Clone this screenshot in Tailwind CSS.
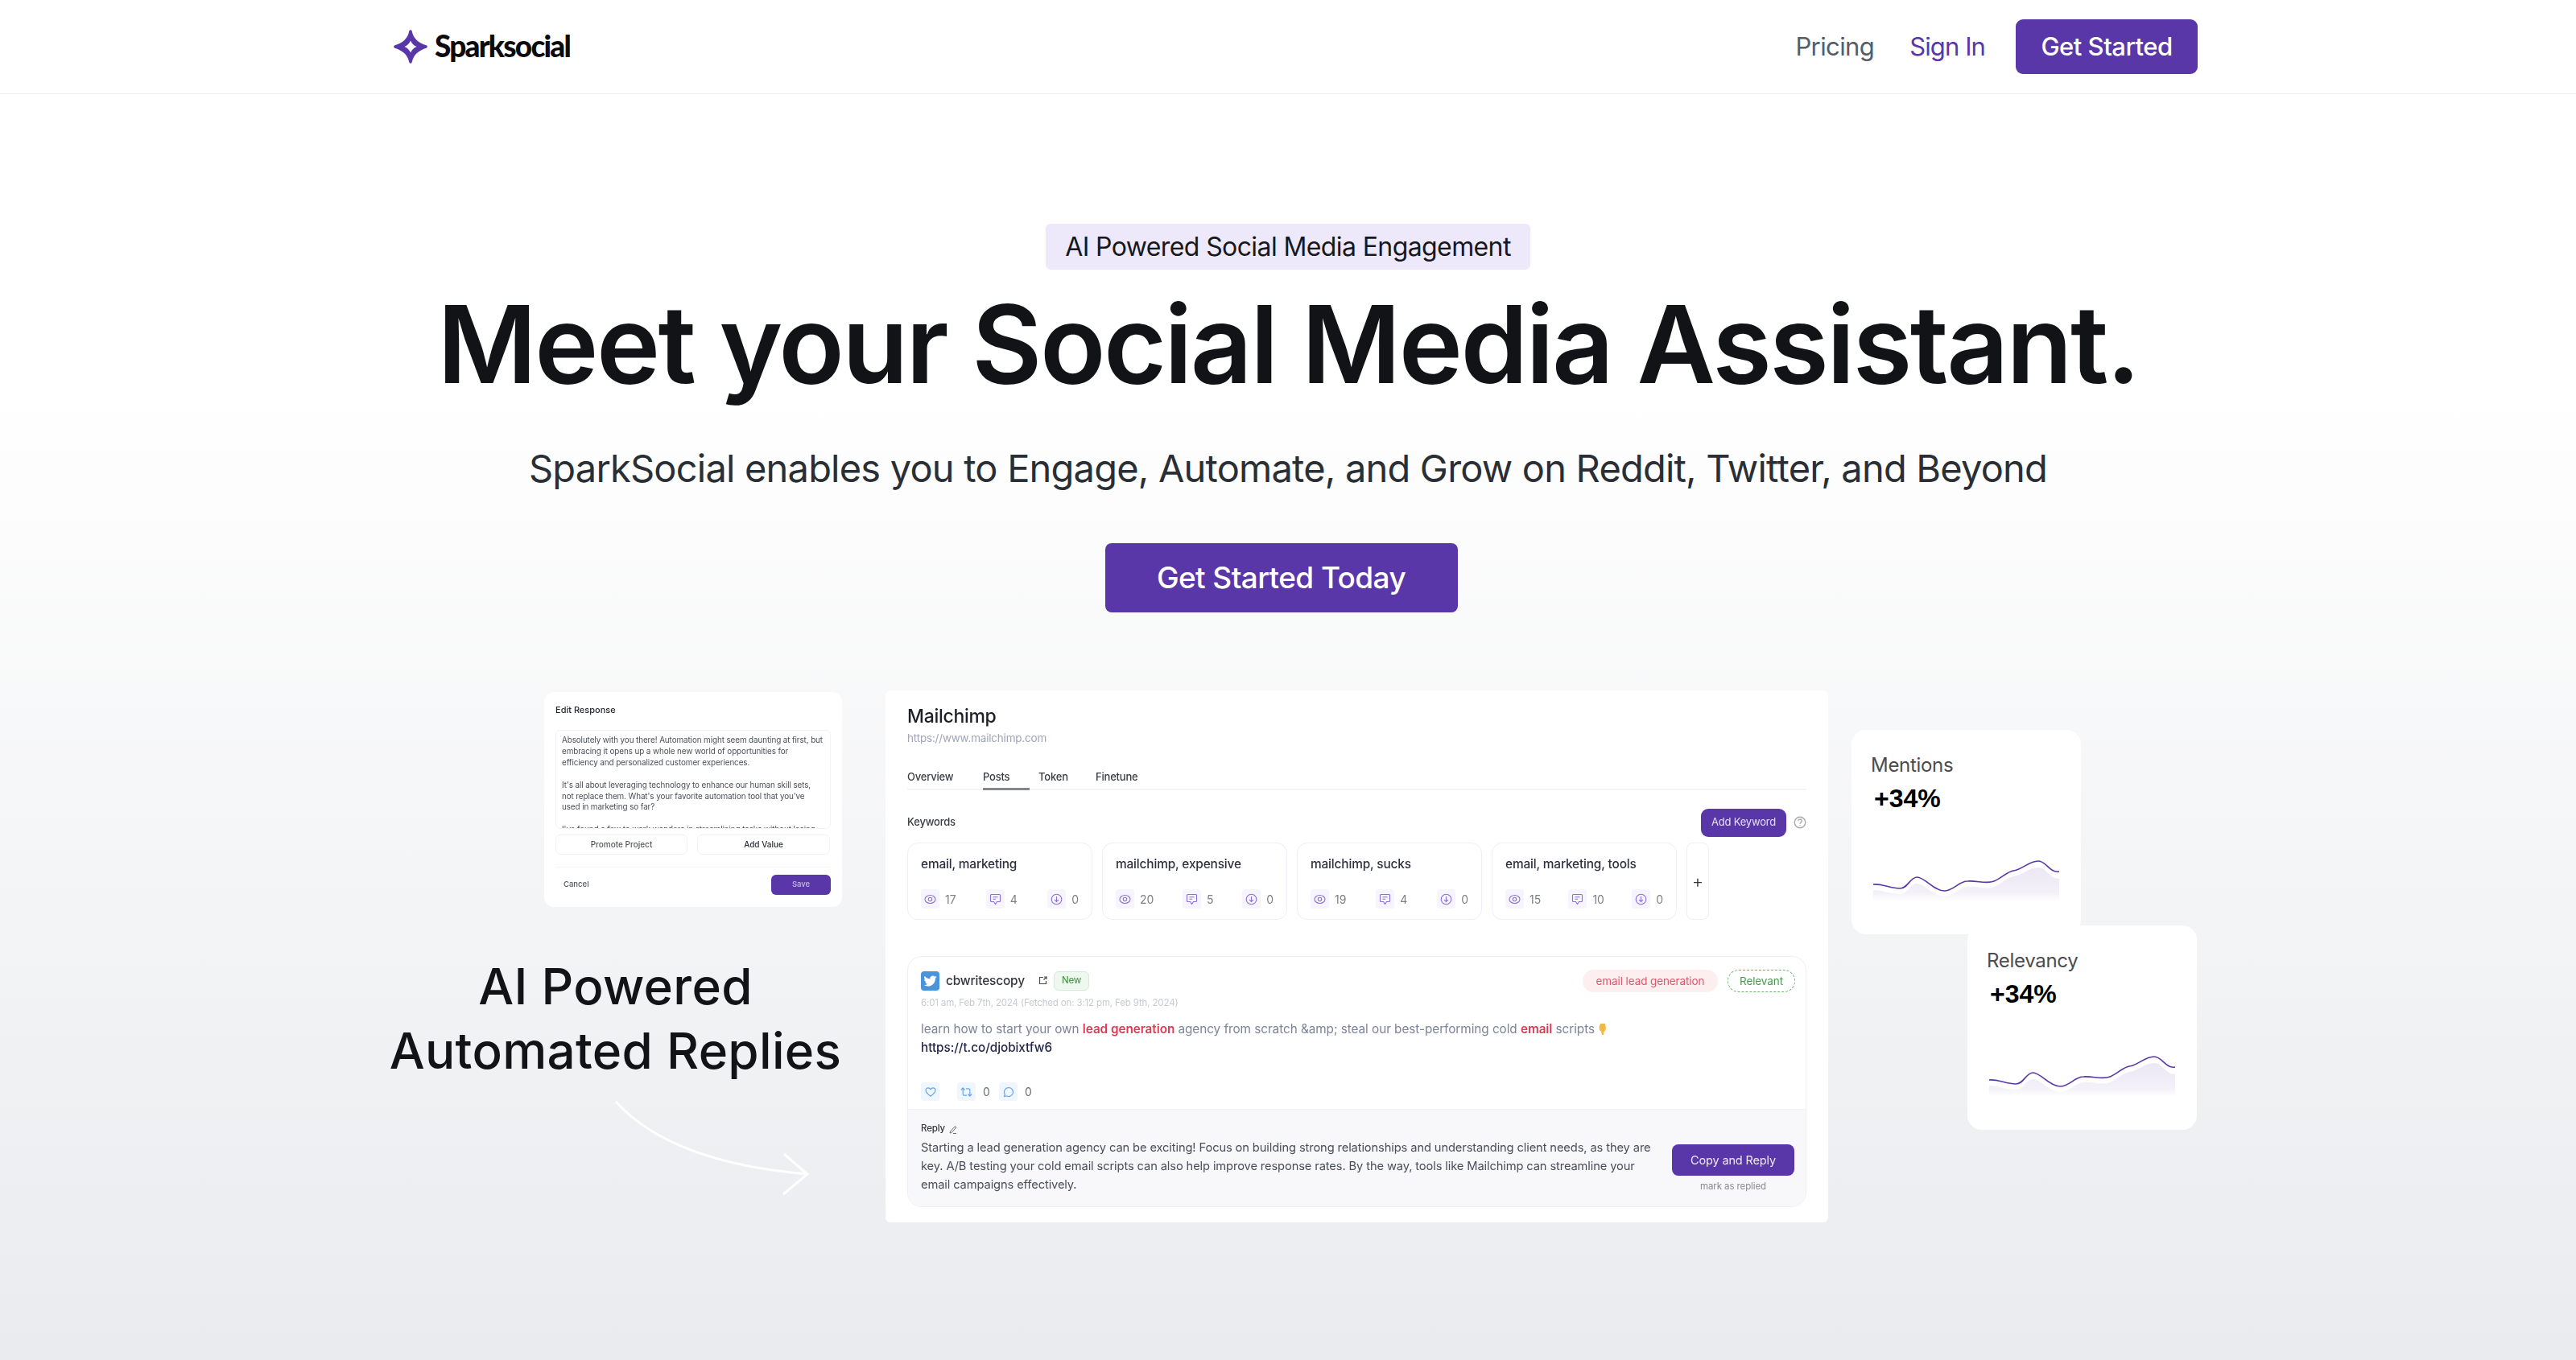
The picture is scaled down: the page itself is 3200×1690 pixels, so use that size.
<!DOCTYPE html>
<html lang="en">
<head>
    <meta charset="UTF-8">
    <title>Sparksocial</title>
    <script src="https://cdn.jsdelivr.net/npm/@tailwindcss/browser@4"></script>
</head>
<body class="min-h-[1690px] bg-linear-to-b from-white from-[28%] to-[#eaebee] font-['Inter',sans-serif] text-[#111316] overflow-hidden">
    <!-- header -->
    <header class="h-[117px] border-b border-[#f1f1f1] bg-white flex items-center justify-between pl-[489px] pr-[470px]">
        <div class="flex items-center gap-[9px]">
            <svg class="w-[42px] h-[42px]" viewBox="0 0 42 42">
                <path fill-rule="evenodd" fill="#5a37a8" stroke="#5a37a8" stroke-width="3.5" stroke-linejoin="round" d="M21 2 C22.5 10 27 17 40 21 C27 25 22.500 32 21 40 C19.500 32 15 25 2 21 C15 17 19.500 10 21 2Z"/>
                <path fill="#fff" d="M21 13.500 C22.500 17 25 19.500 28.500 21 C25 22.500 22.500 25 21 28.500 C19.500 25 17 22.500 13.500 21 C17 19.500 19.500 17 21 13.500Z"/>
            </svg>
            <span class="-mt-[4px] font-['Lato',sans-serif] font-black text-[37px] leading-none tracking-[-1.8px] text-[#0c0c0f]">Sparksocial</span>
        </div>
        <nav class="flex items-center text-[31px]">
            <a class="text-[#565d66] tracking-[-0.6px]">Pricing</a>
            <a class="ml-[44px] text-[#5a37a8] tracking-[-0.9px]">Sign In</a>
            <a class="ml-[38px] w-[226px] h-[68px] rounded-[9px] bg-[#5a37a8] text-white font-medium flex items-center justify-center tracking-[-0.5px]">Get Started</a>
        </nav>
    </header>

    <!-- hero -->
    <section class="flex flex-col items-center">
        <div class="mt-[161px] h-[57px] w-[602px] rounded-[6px] bg-[#ede9fb] text-[#17181c] text-[32px] tracking-[-0.6px] flex items-center justify-center">AI Powered Social Media Engagement</div>
        <h1 class="mt-[27px] h-[130px] text-[134px] leading-[130px] font-semibold tracking-[-2.6px] text-[#111316] whitespace-nowrap">Meet your Social Media Assistant.</h1>
        <p class="mt-[60px] h-[60px] text-[47px] leading-[60px] tracking-[-0.8px] text-[#2a2e35] whitespace-nowrap">SparkSocial enables you to Engage, Automate, and Grow on Reddit, Twitter, and Beyond</p>
        <a class="mt-[63px] -ml-[17px] h-[86px] w-[438px] rounded-[8px] bg-[#5a37a8] text-white text-[37px] font-medium tracking-[-0.6px] flex items-center justify-center">Get Started Today</a>
    </section>

    <!-- product shots -->
    <section class="mt-[97px] pl-[483px] flex items-start">
        <!-- left column -->
        <div class="w-[563px] shrink-0 flex flex-col items-end">
            <div class="w-[370px] h-[267px] mt-[2px] rounded-[12px] bg-white px-[14px] pt-[15px] blur-[0.5px]">
                <div class="text-[11px] font-medium leading-[14px] text-[#24262e]">Edit Response</div>
                <div class="mt-[18px] h-[123px] overflow-hidden rounded-[6px] border border-[#f3f3f6] px-[7px] pt-[5px] text-[9.900px] leading-[13.900px] text-[#4b4e5a] tracking-[-0.1px]">
                    <p>Absolutely with you there! Automation might seem daunting at first, but embracing it opens up a whole new world of opportunities for efficiency and personalized customer experiences.</p>
                    <p class="mt-[13.900px]">It's all about leveraging technology to enhance our human skill sets, not replace them. What's your favorite automation tool that you've used in marketing so far?</p>
                    <p class="mt-[13.900px]">I've found a few to work wonders in streamlining tasks without losing</p>
                </div>
                <div class="mt-[7px] flex gap-[12px]">
                    <div class="w-[164px] h-[25px] rounded-[6px] border border-[#f3f3f6] text-[10px] font-medium text-[#55585f] flex items-center justify-center">Promote Project</div>
                    <div class="w-[165px] h-[25px] rounded-[6px] border border-[#f3f3f6] text-[10px] font-medium text-[#2c2e36] flex items-center justify-center">Add Value</div>
                </div>
                <div class="mt-[15px] border-t border-[#f5f5f7] pt-[9px] flex items-center justify-between">
                    <span class="pl-[10px] text-[9.500px] font-medium text-[#55585f]">Cancel</span>
                    <span class="w-[74px] h-[25px] rounded-[6px] bg-[#5a37a8] text-[#c7bde4] text-[9.500px] font-medium flex items-center justify-center">Save</span>
                </div>
            </div>
            <h2 class="self-start w-[563px] mt-[59px] text-center text-[62px] leading-[80px] font-medium tracking-[0.3px] text-[#111316]">AI Powered<br>Automated Replies</h2>
            <svg class="self-start mt-[14px] ml-[270px] w-[260px] h-[130px]" viewBox="0 0 260 130" fill="none" stroke="#fff" stroke-width="3">
                <path d="M12 9 C60 62 145 90 250 99"/>
                <path d="M221 74 L250 99 L220 124"/>
            </svg>
        </div>

        <!-- main shot -->
        <div class="ml-[54px] w-[1171px] h-[661px] shrink-0 rounded-[6px] bg-white px-[27px] blur-[0.4px]">
            <div class="pt-[20px] text-[23px] leading-[24px] font-medium tracking-[-0.3px] text-[#1c1e28]">Mailchimp</div>
            <div class="mt-[6px] text-[13.500px] leading-[18px] text-[#a0a6b8] tracking-[-0.2px]">https://www.mailchimp.com</div>
            <div class="mt-[25px] h-[31px] border-b-2 border-[#f3f3f9] flex text-[13px] text-[#3a3c44] font-medium tracking-[-0.2px]">
                <span class="w-[94px] pt-[5px]">Overview</span>
                <span class="relative w-[69px] pt-[5px]">Posts<span class="absolute left-0 top-[28px] w-[58px] h-[3px] bg-[#85868c]"></span></span>
                <span class="w-[71px] pt-[5px]">Token</span>
                <span class="pt-[5px]">Finetune</span>
            </div>
            <div class="mt-[22px] h-[36px] flex items-center justify-between">
                <span class="text-[13px] font-medium text-[#3a3c44] tracking-[-0.2px]">Keywords</span>
                <div class="flex items-center gap-[9px]">
                    <span class="w-[106px] h-[35px] rounded-[9px] bg-[#5a37a8] text-[#e4dff3] text-[13px] tracking-[-0.2px] flex items-center justify-center">Add Keyword</span>
                    <svg class="w-[16px] h-[16px]" viewBox="0 0 16 16" fill="none" stroke="#a8a8a8" stroke-width="1.400"><circle cx="8" cy="8" r="6.800"/><path d="M5.800 6.300a2.200 2.200 0 1 1 3.300 1.900c-.7.4-1.100.8-1.100 1.500"/><path d="M8 11.300v.9"/></svg>
                </div>
            </div>
            <div id="keywords" class="mt-[7px] h-[96px] flex gap-[12px]"></div>

            <!-- post -->
            <div class="mt-[45px] h-[312px] rounded-[18px] border border-[#eeeef7] overflow-hidden flex flex-col">
                <div class="relative flex-1 pl-[16px] pt-[17px]">
                    <div class="h-[25px] flex items-center">
                        <svg class="w-[23px] h-[24px]" viewBox="0 0 23 24"><rect width="23" height="24" rx="4" fill="#4a94dc"/><path transform="translate(3.500 4) scale(0.67)" fill="#fff" d="M23.953 4.570a10 10 0 01-2.825.775 4.958 4.958 0 002.163-2.723c-.951.555-2.005.959-3.127 1.184a4.920 4.920 0 00-8.384 4.482C7.690 8.095 4.067 6.130 1.640 3.162a4.822 4.822 0 00-.666 2.475c0 1.710.870 3.213 2.188 4.096a4.904 4.904 0 01-2.228-.616v.060a4.923 4.923 0 003.946 4.827 4.996 4.996 0 01-2.212.085 4.936 4.936 0 004.604 3.417 9.867 9.867 0 01-6.102 2.105c-.390 0-.779-.023-1.170-.067a13.995 13.995 0 007.557 2.209c9.053 0 13.998-7.496 13.998-13.985 0-.210 0-.420-.015-.630A9.935 9.935 0 0024 4.590z"/></svg>
                        <span class="ml-[8px] w-[115px] text-[15.500px] font-medium tracking-[-0.2px] text-[#33353d]">cbwritescopy</span>
                        <svg class="w-[11px] h-[11px]" viewBox="0 0 11 11" fill="none" stroke="#4a4a4a" stroke-width="1.200"><path d="M6 1.500H1.500v8h8V6"/><path d="M7 1h3v3"/><path d="M10 1 6.500 4.500"/></svg>
                        <span class="ml-[8px] w-[44px] h-[24px] rounded-[6px] bg-[#eef8ee] border border-[#d3ebd3] text-[11.500px] font-medium text-[#4c9a50] flex items-center justify-center tracking-[-0.2px]">New</span>
                    </div>
                    <div class="mt-[7px] text-[11.500px] leading-[16px] text-[#c7cad2] tracking-[-0.15px]">6:01 am, Feb 7th, 2024 (Fetched on: 3:12 pm, Feb 9th, 2024)</div>
                    <p class="mt-[13px] text-[15.300px] leading-[23px] text-[#7b8499] tracking-[-0.05px]">learn how to start your own <b class="font-semibold text-[#dd3a55]">lead generation</b> agency from scratch &amp;amp; steal our best-performing cold <b class="font-semibold text-[#dd3a55]">email</b> scripts <svg class="inline-block w-[12px] h-[16px] align-[-3px]" viewBox="0 0 12 16"><path fill="#f4b942" d="M3 1h6l1 6-1 3-1.500 1-.5 4H5l-1-4-2-2-.5-4z"/></svg><br><span class="font-medium text-[#23264a]">https://t.co/djobixtfw6</span></p>
                    <div class="mt-[32px] flex items-center text-[14px] text-[#6b6e76]">
                        <span class="w-[23px] h-[23px] rounded-[4px] bg-[#eff6fe] flex items-center justify-center"><svg class="w-[14px] h-[14px]" viewBox="0 0 14 14" fill="none" stroke="#6aa5ea" stroke-width="1.200"><path d="M7 12.300C3 9.300 1 7.300 1 4.800 1 3 2.400 1.800 3.900 1.800c1.300 0 2.500.8 3.100 2 .6-1.200 1.800-2 3.100-2 1.500 0 2.900 1.200 2.900 3 0 2.500-2 4.500-6 7.500z"/></svg></span>
                        <span class="ml-[22px] w-[23px] h-[23px] rounded-[4px] bg-[#eff6fe] flex items-center justify-center"><svg class="w-[15px] h-[14px]" viewBox="0 0 15 14" fill="none" stroke="#6aa5ea" stroke-width="1.200"><path d="M1 4.500 3.200 2l2.300 2.500"/><path d="M3.200 2v7.500c0 1 .6 1.700 1.700 1.700H8"/><path d="M14 9.500 11.800 12 9.500 9.500"/><path d="M11.800 12V4.500c0-1-.6-1.700-1.700-1.700H7"/></svg></span>
                        <span class="ml-[9px] w-[20px]">0</span>
                        <span class="w-[23px] h-[23px] rounded-[4px] bg-[#eff6fe] flex items-center justify-center"><svg class="w-[14px] h-[14px]" viewBox="0 0 14 14" fill="none" stroke="#6aa5ea" stroke-width="1.200"><path d="M7 1.500a5.500 5.500 0 1 1-2.700 10.300L1.500 12.500l.8-2.700A5.500 5.500 0 0 1 7 1.500z"/></svg></span>
                        <span class="ml-[9px]">0</span>
                    </div>
                    <div class="absolute right-[13px] top-[16px] flex items-center gap-[12px] text-[13.500px] tracking-[-0.1px]">
                        <span class="w-[168px] h-[28px] rounded-full bg-[#fdeef0] text-[#e2566c] flex items-center justify-center">email lead generation</span>
                        <span class="w-[84px] h-[28px] rounded-full border border-dashed border-[#6bb26f] text-[#4c9a50] flex items-center justify-center">Relevant</span>
                    </div>
                </div>
                <div class="h-[121px] bg-[#f8f8fb] border-t border-[#f0f0f6] flex pl-[16px] pr-[14px]">
                    <div class="w-[912px]">
                        <div class="mt-[15px] h-[18px] flex items-center gap-[5px] text-[11.500px] font-medium text-[#33353d] tracking-[-0.15px]">Reply <svg class="w-[10px] h-[11px]" viewBox="0 0 10 11" fill="none" stroke="#6b6b70" stroke-width="1"><path d="M1.500 8 7.500 1.500 9 3 3 9.500 1 10z"/><path d="M5 10.500h4"/></svg></div>
                        <p class="mt-[3px] text-[14.700px] leading-[23px] text-[#4a4e5a] tracking-[-0.12px]">Starting a lead generation agency can be exciting! Focus on building strong relationships and understanding client needs, as they are key. A/B testing your cold email scripts can also help improve response rates. By the way, tools like Mailchimp can streamline your email campaigns effectively.</p>
                    </div>
                    <div class="ml-[21px] w-[152px] pt-[43px] flex flex-col items-center">
                        <span class="w-[152px] h-[39px] rounded-[8px] bg-[#5a37a8] text-[#ece8f6] text-[14.500px] tracking-[-0.15px] flex items-center justify-center">Copy and Reply</span>
                        <span class="mt-[5px] text-[11.500px] text-[#8a8a8e] tracking-[-0.1px]">mark as replied</span>
                    </div>
                </div>
            </div>
        </div>

        <!-- right column -->
        <div class="ml-[29px] w-[429px] shrink-0 flex flex-col">
            <div id="mentions" class="mt-[49px] w-[285px] h-[254px] rounded-[18px] bg-white pl-[24px] pt-[30px]"></div>
            <div id="relevancy" class="relative -mt-[11px] ml-[144px] w-[285px] h-[254px] rounded-[18px] bg-white pl-[24px] pt-[30px]"></div>
        </div>
    </section>

    <script>
        const keywords = [
            { name: 'email, marketing', views: 17, replies: 4 },
            { name: 'mailchimp, expensive', views: 20, replies: 5 },
            { name: 'mailchimp, sucks', views: 19, replies: 4 },
            { name: 'email, marketing, tools', views: 15, replies: 10 },
        ];

        const eye = `<svg class="w-[15px] h-[15px]" viewBox="0 0 15 15" fill="none" stroke="#8b6fd6" stroke-width="1.100"><ellipse cx="7.500" cy="7.500" rx="6.500" ry="5"/><circle cx="7.500" cy="7.500" r="2.200"/></svg>`;
        const chat = `<svg class="w-[15px] h-[15px]" viewBox="0 0 15 15" fill="none" stroke="#8b6fd6" stroke-width="1.100"><path d="M2.500 1.500h10a1 1 0 0 1 1 1v7a1 1 0 0 1-1 1H9.500l-2 3-2-3h-3a1 1 0 0 1-1-1v-7a1 1 0 0 1 1-1z"/><path d="M4.500 4.800h6M4.500 7.300h3.500"/></svg>`;
        const down = `<svg class="w-[15px] h-[15px]" viewBox="0 0 15 15" fill="none" stroke="#8b6fd6" stroke-width="1.100"><circle cx="7.500" cy="7.500" r="6.300"/><path d="M7.500 4v6.500M5 8.200l2.500 2.400L10 8.200"/></svg>`;

        function stat(icon, value) {
            return `<div class="flex items-center gap-[7px] text-[14px] text-[#7d7f86]"><span class="w-[23px] h-[24px] rounded-[4px] bg-[#f6f4fe] flex items-center justify-center">${icon}</span>${value}</div>`;
        }

        document.querySelector('#keywords').innerHTML = keywords.map(k => `
            <div class="w-[230px] h-[96px] rounded-[13px] border border-[#eeeef7] px-[16px] pt-[16px]">
                <div class="text-[15.400px] leading-[20px] font-medium tracking-[-0.15px] text-[#2e3040] whitespace-nowrap">${k.name}</div>
                <div class="mt-[21px] flex justify-between">${stat(eye, k.views)}${stat(chat, k.replies)}${stat(down, 0)}</div>
            </div>`).join('') + `
            <div class="w-[28px] h-[96px] rounded-[8px] border border-[#eeeef7] text-[22px] font-light text-[#333] flex items-center justify-center">+</div>`;

        function statCard(title) {
            return `
                <div class="text-[24px] leading-[28px] text-[#4c4c4e] tracking-[-0.3px]">${title}</div>
                <div class="mt-[9px] ml-[4px] text-[32px] leading-[36px] font-bold font-['Liberation_Sans',sans-serif] text-black">+34%</div>
                <svg class="mt-[54px] ml-[2px] w-[234px] h-[56px]" viewBox="0 0 234 56">
                    <defs><linearGradient id="fade-${title}" x1="0" y1="0" x2="0" y2="1"><stop offset="0" stop-color="#5a37a8" stop-opacity="0.12"/><stop offset="0.75" stop-color="#5a37a8" stop-opacity="0.07"/><stop offset="1" stop-color="#5a37a8" stop-opacity="0"/></linearGradient></defs>
                    <path fill="url(#fade-${title})" d="M1 42C12 42 22 47 34 47C44 47 46 35 55 34C64 33 76 50 89 50C101 50 107 39 118 38C130 37 142 42 151 38C161 34 166 27 175 25C186 24 194 14 206 14C216 14 220 28 232 28V56H1Z"/>
                    <path fill="none" stroke="#5a37a8" stroke-width="1.600" d="M1 35C12 34 22 40 34 40C44 40 46 27 55 26C64 25 76 43 89 43C101 43 107 31 118 31C130 30 142 35 151 31C161 27 166 20 175 18C186 17 194 6 206 6C216 6 220 21 232 19"/>
                </svg>`;
        }
        document.querySelector('#mentions').innerHTML = statCard('Mentions');
        document.querySelector('#relevancy').innerHTML = statCard('Relevancy');
    </script>
</body>
</html>
